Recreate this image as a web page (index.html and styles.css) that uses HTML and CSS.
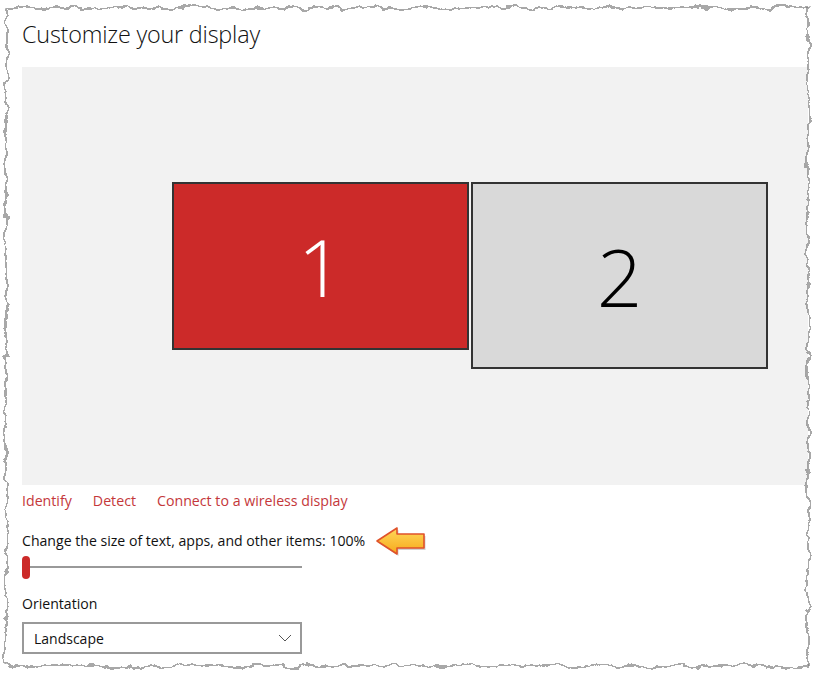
FILE: index.html
```html
<!DOCTYPE html>
<html lang="en">
<head>
    <meta charset="UTF-8">
    <title>Display settings</title>
    <link rel="stylesheet" href="styles.css">
</head>
<body>
    <div class="page">
        <h1 class="title">Customize your display</h1>

        <div class="arrange">
            <div class="monitor monitor-main">1</div>
            <div class="monitor monitor-second">2</div>
        </div>

        <div class="links">
            <a href="#">Identify</a>
            <a href="#">Detect</a>
            <a href="#">Connect to a wireless display</a>
        </div>

        <div class="scale-row">
            <span class="label">Change the size of text, apps, and other items: 100%</span>
            <svg class="pointer" width="54" height="32" viewBox="0 0 54 32">
                <defs>
                    <linearGradient id="arrowFill" x1="0" y1="0" x2="0" y2="1">
                        <stop offset="0" stop-color="#ffd85a"/>
                        <stop offset="1" stop-color="#f6a91c"/>
                    </linearGradient>
                </defs>
                <polygon points="2,15 22,2 22,8 49,8 49,22 22,22 22,28" fill="#000" opacity="0.18" transform="translate(1.5,2)"/>
                <polygon points="2,15 22,2 22,8 49,8 49,22 22,22 22,28" fill="url(#arrowFill)" stroke="#e0522a" stroke-width="1.6" stroke-linejoin="round"/>
            </svg>
        </div>

        <div class="slider">
            <span class="thumb"></span>
            <span class="track"></span>
        </div>

        <div class="label orient">Orientation</div>
        <div class="select">
            <span>Landscape</span>
            <svg width="14" height="8" viewBox="0 0 14 8"><polyline points="1,1 7,7 13,1" fill="none" stroke="#555" stroke-width="1"/></svg>
        </div>
    </div>

    <svg class="torn" width="815" height="674" viewBox="0 0 815 674">
        <defs>
            <filter id="rough" x="-5%" y="-5%" width="110%" height="110%">
                <feTurbulence type="fractalNoise" baseFrequency="0.08" numOctaves="4" seed="4" result="n"/>
                <feDisplacementMap in="SourceGraphic" in2="n" scale="10" xChannelSelector="R" yChannelSelector="G"/>
            </filter>
        </defs>
        <path d="M-40,-40 H855 V714 H-40 Z M6,8 V666 H808 V8 Z" fill="#fff" fill-rule="evenodd" filter="url(#rough)"/>
        <rect x="6" y="8" width="802" height="658" fill="none" stroke="#7a7a7a" stroke-width="1.3" filter="url(#rough)"/>
    </svg>
</body>
</html>
```

FILE: styles.css
```css
html{
    box-sizing: border-box;
}
*,*::before,*::after{
    box-sizing: inherit;
    margin: 0;
    padding: 0;
}
body{
    background-color: #fff;
    font-family: "Open Sans", "Noto Sans", sans-serif;
    color: #000;
    width: 815px;
    height: 674px;
    overflow: hidden;
    position: relative;
}
.page{
    padding: 18px 0 0 22px;
}
.title{
    font-size: 23.4px;
    font-weight: 300;
    line-height: 32px;
    letter-spacing: -0.2px;
    color: #111;
}
.arrange{
    margin-top: 17px;
    width: 786px;
    height: 418px;
    background-color: #f2f2f2;
    display: flex;
    align-items: flex-start;
    gap: 2px;
    padding: 115px 0 0 150px;
}
.monitor{
    width: 297px;
    border: 2px solid #333;
    display: flex;
    align-items: center;
    justify-content: center;
    font-size: 80px;
    font-weight: 300;
    line-height: 1;
}
.monitor-main{
    height: 168px;
    background-color: #cc2a29;
    color: #fff;
}
.monitor-second{
    height: 187px;
    background-color: #d9d9d9;
    color: #000;
}
.links{
    display: flex;
    gap: 21px;
    margin-top: 6px;
    font-size: 14.2px;
    line-height: 20px;
}
.links a{
    color: #c4373a;
    text-decoration: none;
}
.scale-row{
    display: flex;
    align-items: center;
    margin-top: 18px;
    height: 24px;
}
.label{
    font-size: 14.1px;
    line-height: 20px;
    color: #111;
}
.pointer{
    margin-left: 10px;
    margin-top: 2px;
}
.slider{
    display: flex;
    align-items: center;
    height: 24px;
    margin-top: 2px;
    width: 280px;
}
.thumb{
    width: 8px;
    height: 23px;
    border-radius: 4px;
    background-color: #cc2a29;
}
.track{
    flex: 1;
    height: 2px;
    background-color: #999;
}
.orient{
    margin-top: 15px;
}
.select{
    margin-top: 8px;
    width: 280px;
    height: 32px;
    border: 2px solid #999;
    display: flex;
    align-items: center;
    justify-content: space-between;
    padding: 0 8px 0 10px;
    font-size: 14px;
    color: #111;
}
.torn{
    position: absolute;
    left: 0;
    top: 0;
    pointer-events: none;
}
```
